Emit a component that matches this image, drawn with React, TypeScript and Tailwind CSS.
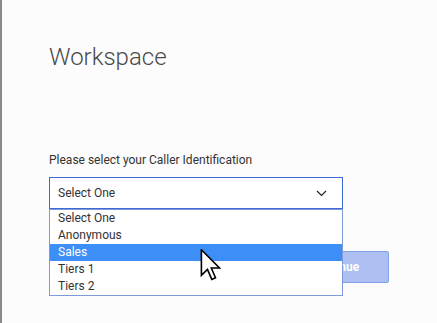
import React from "react";

const items = ["Select One", "Anonymous", "Sales", "Tiers 1", "Tiers 2"];

export default function App() {
  return (
    <div
      className="w-[437px] h-[323px] bg-[#fcfcfc] flex overflow-hidden"
      style={{ fontFamily: "Roboto, 'Noto Sans', sans-serif" }}
    >
      <div className="w-[2px] h-full bg-[#8a8a8a] shrink-0" />
      <div className="relative flex-1 pl-[47px] pt-[43px]">
        <h1 className="text-[24px] leading-[28px] font-light text-[#4a4a4a]">Workspace</h1>
        <div className="mt-[81px] w-[340px]">
          <p className="text-[12px] leading-[16px] text-[#333]">
            Please select your Caller Identification
          </p>
          <div className="relative mt-[9px] w-[294px]">
            <div className="h-[32px] border border-[#3f68d8] bg-white flex items-center justify-between pl-[8px] pr-[15px] text-[12px] text-[#333]">
              <span>Select One</span>
              <svg width="11" height="7" viewBox="0 0 11 7">
                <polyline points="1,1 5.5,5.5 10,1" fill="none" stroke="#222" strokeWidth="1.2" />
              </svg>
            </div>
            <div className="absolute left-0 top-[32px] w-[294px] z-10 border border-[#7f9ad9] bg-white">
              {items.map((it) => (
                <div
                  key={it}
                  className={
                    it === "Sales"
                      ? "h-[17px] leading-[17px] pl-[8px] text-[12px] bg-[#3e8ef8] text-white"
                      : "h-[17px] leading-[17px] pl-[8px] text-[12px] text-[#333]"
                  }
                >
                  {it}
                </div>
              ))}
            </div>
          </div>
          <div className="flex justify-end mt-[42px]">
            <button className="h-[32px] w-[108px] rounded-[2px] border border-[#86a2e9] bg-[#adc0f1] text-white font-bold text-[12px]">
              Continue
            </button>
          </div>
        </div>
        <svg
          className="absolute left-[198px] top-[249px] z-20"
          width="22"
          height="32"
          viewBox="0 0 13 20"
        >
          <path
            d="M0.5,0.5 L0.5,16.5 L4.3,12.8 L7,19 L9.3,18 L6.7,11.9 L11.8,11.9 Z"
            fill="white"
            stroke="black"
            strokeWidth="1"
            strokeLinejoin="miter"
          />
        </svg>
      </div>
    </div>
  );
}
